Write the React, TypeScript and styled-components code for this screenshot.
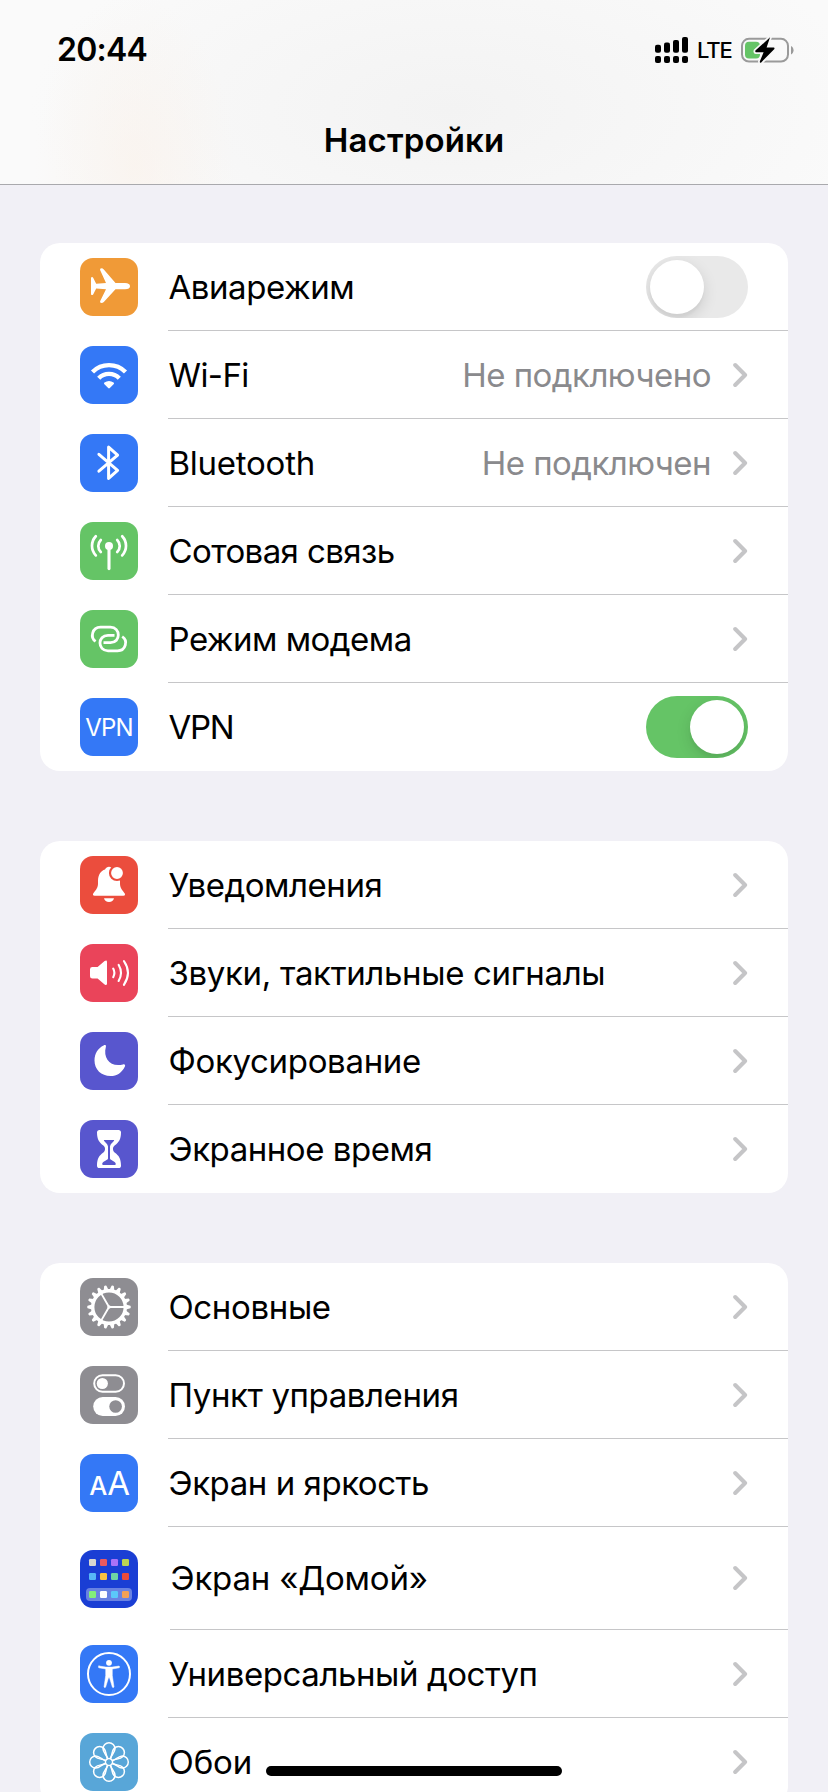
import React from 'react';
import styled, { createGlobalStyle } from 'styled-components';

const GlobalStyle = createGlobalStyle`
  * { box-sizing: border-box; }
  body {
    margin: 0;
    background: #f1f0f6;
    font-family: Inter, "Noto Sans", sans-serif;
    overflow: hidden;
  }
`;

const Screen = styled.div`
  display: flex;
  flex-direction: column;
  width: 828px;
  height: 1792px;
  overflow: hidden;
  background: #f1f0f6;
  color: #000;
`;

const Header = styled.header`
  display: flex;
  flex-direction: column;
  flex: none;
  height: 185px;
  border-bottom: 1px solid #a9a9ad;
  background:
    radial-gradient(ellipse 100px 170px at 135px 165px, rgba(250, 241, 233, 0.6), rgba(250, 243, 236, 0) 100%),
    radial-gradient(ellipse 420px 200px at 450px 110px, #f3f3f3 0%, rgba(243, 243, 243, 0) 100%),
    #fafafa;
`;

const StatusBar = styled.div`
  display: flex;
  align-items: center;
  justify-content: space-between;
  height: 100px;
  padding: 0 34px 0 57px;
`;

const Clock = styled.time`
  font-size: 32px;
  font-weight: 600;
  line-height: 40px;
  letter-spacing: -0.75px;
`;

const StatusIcons = styled.div`
  display: flex;
  align-items: center;
`;

const Network = styled.span`
  width: 51px;
  padding-left: 8px;
  font-size: 22px;
  font-weight: 500;
  line-height: 30px;
  letter-spacing: -1.1px;
`;

const NavTitle = styled.h1`
  margin: 20px 0 0;
  text-align: center;
  font-size: 33px;
  font-weight: 600;
  line-height: 40px;
  letter-spacing: 0.15px;
`;

const Groups = styled.main`
  display: flex;
  flex-direction: column;
  gap: 70px;
  padding: 58px 40px 0;
`;

const Group = styled.section`
  display: flex;
  flex-direction: column;
  flex: none;
  border-radius: 20px;
  background: #fff;
  overflow: hidden;
`;

const Row = styled.div<{ $tall?: boolean }>`
  display: flex;
  align-items: center;
  height: ${(p) => (p.$tall ? 103 : 88)}px;
  padding-left: 40px;
`;

const Tile = styled.div<{ $color: string }>`
  flex: none;
  width: 58px;
  height: 58px;
  border-radius: 13px;
  background: ${(p) => p.$color};
  overflow: hidden;

  svg {
    display: block;
  }
`;

const RowBody = styled.div<{ $divider: boolean; $tall?: boolean }>`
  display: flex;
  align-items: center;
  flex: 1;
  height: 100%;
  margin-left: ${(p) => (p.$tall ? 32 : 30)}px;
  padding-right: 40px;
  border-bottom: 1px solid ${(p) => (p.$divider ? '#c6c6c8' : 'transparent')};
`;

const Label = styled.span<{ $tracking: number }>`
  flex: 1;
  padding-left: 0.5px;
  font-size: 33px;
  line-height: 42px;
  letter-spacing: ${(p) => p.$tracking}px;
  white-space: nowrap;
`;

const Value = styled.span<{ $tracking: number }>`
  margin-right: 22px;
  color: #8a8a8d;
  font-size: 33px;
  line-height: 42px;
  letter-spacing: ${(p) => p.$tracking}px;
  white-space: nowrap;
`;

const Toggle = styled.span<{ $on: boolean }>`
  display: flex;
  justify-content: ${(p) => (p.$on ? 'flex-end' : 'flex-start')};
  width: 102px;
  height: 62px;
  padding: 4px;
  border-radius: 31px;
  background: ${(p) => (p.$on ? '#65c466' : '#e9e9e9')};
  overflow: hidden;
`;

const Knob = styled.span`
  width: 54px;
  height: 54px;
  border-radius: 50%;
  background: #fff;
  box-shadow: 0 5px 15px rgba(0, 0, 0, 0.12), 0 4px 3px rgba(0, 0, 0, 0.03);
`;

const HomeIndicator = styled.div`
  position: absolute;
  left: 266px;
  top: 1766px;
  width: 296px;
  height: 10px;
  border-radius: 5px;
  background: #000;
`;

const Chevron = () => (
  <svg width="15" height="26" viewBox="0 0 15 26" fill="none">
    <path d="M2.2 3 L12.1 13 L2.2 23" stroke="#c5c5c7" strokeWidth="4" strokeLinecap="round" strokeLinejoin="round" />
  </svg>
);

const Glyph = ({ children }: { children: React.ReactNode }) => (
  <svg width="58" height="58" viewBox="0 0 58 58" fill="none" strokeLinecap="round" strokeLinejoin="round">
    {children}
  </svg>
);

const Airplane = () => (
  <Glyph>
    <path
      fill="#fff"
      d="M45 25H35.5L23.8 11.4Q22.8 10.2 21.5 10.2Q19.6 10.3 20.1 12L26 25L16.2 25.8L13.3 20Q12.7 18.8 11.8 19Q11 19.2 11 20.2V36Q11 37 11.8 37.1Q12.8 37.2 13.3 36.2L16.2 30.6L26 31.3L20.1 43.3Q19.6 45 21.5 45.1Q22.8 45.1 23.8 44L35.5 31.3H45Q50 31 50 28.2Q50 25.2 45 25Z"
    />
  </Glyph>
);

const Wifi = () => (
  <Glyph>
    <g stroke="#fff" strokeWidth="4.4" strokeLinecap="butt">
      <path d="M12.5 26A23.3 23.3 0 0 1 45.5 26" />
      <path d="M18.7 32.2A14.5 14.5 0 0 1 39.3 32.2" />
    </g>
    <path fill="#fff" d="M28.2 42L24.2 38Q23.6 37.2 24.4 36.6Q29 33.4 33.6 36.6Q34.4 37.2 33.8 38L29.8 42Q29 42.8 28.2 42Z" />
  </Glyph>
);

const Bluetooth = () => (
  <Glyph>
    <path stroke="#fff" strokeWidth="3" d="M18.9 20.3L37.6 36.3L28.6 44.4V13.1L37.6 21.2L18.9 37.2" />
  </Glyph>
);

const Antenna = () => (
  <Glyph>
    <circle cx="29" cy="24" r="4" fill="#fff" />
    <path stroke="#fff" strokeWidth="3.1" d="M29 25V46.6" />
    <g stroke="#fff" strokeWidth="2.7">
      <path d="M20.8 18A8.4 8.4 0 0 0 20.8 30" />
      <path d="M15.8 14.2A14 14 0 0 0 15.8 33.4" />
      <path d="M37.2 18A8.4 8.4 0 0 1 37.2 30" />
      <path d="M42.2 14.2A14 14 0 0 1 42.2 33.4" />
    </g>
  </Glyph>
);

const Hotspot = () => (
  <Glyph>
    <g stroke="#fff" strokeWidth="2.8" strokeLinecap="butt">
      <path d="M15.6 31.4C9.8 27.6 12.2 17.2 20.5 17.2H30.5C40.8 17.2 41 32.6 30.5 32.6H23.5" />
      <path d="M42.2 26.6C48.2 30.4 46 40.8 37.5 40.8H28C17.3 40.8 17.3 25.4 28 25.4H34.5" />
    </g>
  </Glyph>
);

const IconText = styled.text`
  fill: #fff;
  font-family: Inter, sans-serif;
`;

const Vpn = () => (
  <Glyph>
    <IconText x="5.2" y="38" fontSize="24" letterSpacing="-0.8">VPN</IconText>
  </Glyph>
);

const Bell = () => (
  <Glyph>
    <path
      fill="#fff"
      d="M13.2 37.6C14.6 35.4 17.8 32.6 18 28V24.5C18.2 18.2 20.8 14.8 25 13.4C26 11.6 27.3 10.7 29 10.7C30.7 10.7 32 11.6 33 13.4C37.2 14.8 39.8 18.2 40 24.5V28C40.2 32.6 43.4 35.4 44.8 37.6Q45.6 39.8 43.4 39.8H14.6Q12.4 39.8 13.2 37.6Z"
    />
    <path fill="#fff" d="M24 42.2H34C33.6 44.6 31.6 46 29 46C26.4 46 24.4 44.6 24 42.2Z" />
    <circle cx="37" cy="17" r="7" fill="#fff" stroke="#eb4d3d" strokeWidth="2.2" />
  </Glyph>
);

const Speaker = () => (
  <Glyph>
    <path
      fill="#fff"
      d="M12.4 23H17.6L24.6 17.1Q27 15.6 27 18V39.6Q27 42 24.6 40.4L17.6 34.4H12.4Q10 34.4 10 32.2V25.2Q10 23 12.4 23Z"
    />
    <g stroke="#fff" strokeWidth="2.1">
      <path d="M33.2 24.6Q35.6 28.9 33.2 33.2" />
      <path d="M38.6 20.8Q43.4 28.9 38.6 37" />
      <path d="M43.9 17Q52 28.9 43.9 40.8" />
    </g>
  </Glyph>
);

const Moon = () => (
  <Glyph>
    <path
      fill="#fff"
      d="M23.6 13.4C25.2 12.6 26.3 13.3 25.9 14.8C22.6 26.6 31 35.8 43 32.4C44.8 31.9 45.6 33 44.9 34.4C42 40.6 36.8 44 30.6 44C21.2 44 14.5 37.5 14.5 28.5C14.5 21.4 18.2 15.9 23.6 13.4Z"
    />
  </Glyph>
);

const Hourglass = () => (
  <Glyph>
    <path
      fill="#fff"
      d="M19.5 10H38.5Q41 10 41 12.6C41 19.6 38.6 22.6 35 25.3C33.5 26.4 33 27.4 33 29C33 30.6 33.5 31.6 35 32.7C38.6 35.4 41 38.4 41 45.4Q41 48 38.5 48H19.5Q17 48 17 45.4C17 38.4 19.4 35.4 23 32.7C24.5 31.6 25 30.6 25 29C25 27.4 24.5 26.4 23 25.3C19.4 22.6 17 19.6 17 12.6Q17 10 19.5 10Z"
    />
    <path fill="#5856ce" d="M24.2 20H33.8Q34.4 20.2 34 20.8C33 22.4 30.2 24 30 26.4V38.6C30.2 40.6 35.8 41.2 35.8 44Q35.8 44.9 34.8 44.9H23.2Q22.2 44.9 22.2 44C22.2 41.2 27.8 40.6 28 38.6V26.4C27.8 24 25 22.4 24 20.8Q23.6 20.2 24.2 20Z" />
  </Glyph>
);

const gearTeeth = Array.from({ length: 18 }, (_, i) => i * 20);
const gearSpokes = [0, 120, 240];

const Gear = () => (
  <Glyph>
    <circle cx="29" cy="29" r="16.3" stroke="#fff" strokeWidth="3.4" />
    {gearTeeth.map((angle) => (
      <path key={angle} fill="#fff" transform={`rotate(${angle} 29 29)`} d="M46 26.6L50.4 27.8Q51.4 29 50.4 30.2L46 31.4Z" />
    ))}
    {gearSpokes.map((angle) => (
      <path key={angle} stroke="#fff" strokeWidth="1.9" transform={`rotate(${angle} 29 29)`} d="M29 29H45" />
    ))}
    <circle cx="29" cy="29" r="1.7" fill="#fff" />
  </Glyph>
);

const ControlToggles = () => (
  <Glyph>
    <rect x="14.2" y="9.2" width="29.8" height="16.6" rx="8.3" stroke="#fff" strokeWidth="2" />
    <circle cx="22.3" cy="17.5" r="5.6" fill="#fff" />
    <rect x="13.2" y="31" width="31.8" height="19" rx="9.5" fill="#fff" />
    <circle cx="35.6" cy="40.5" r="6.3" fill="#8e8d92" />
  </Glyph>
);

const TextSize = () => (
  <Glyph>
    <IconText x="9.3" y="41" fontSize="25.5" fontWeight="500" textLength="17">A</IconText>
    <IconText x="27.2" y="41" fontSize="33">A</IconText>
  </Glyph>
);

const homeApps = [
  ['#d8d7d0', '#ea5a60', '#a972f8', '#bbd352'],
  ['#57b7f7', '#f8c43f', '#6fd5a4', '#ea4b3a'],
  ['#83f07a', '#ffffff', '#5bc8fa', '#f2a157'],
];
const homeRows = [9, 23, 41];

const HomeScreen = () => (
  <Glyph>
    <rect x="6" y="38" width="46" height="13" rx="4" fill="#6982e2" />
    {homeApps.map((row, r) =>
      row.map((color, c) => <rect key={color} x={9 + c * 11} y={homeRows[r]} width="7" height="7" rx="1.3" fill={color} />),
    )}
  </Glyph>
);

const Accessibility = () => (
  <Glyph>
    <circle cx="29" cy="29" r="21" stroke="#fff" strokeWidth="2" />
    <circle cx="29" cy="17.8" r="2.9" fill="#fff" />
    <path
      fill="#fff"
      stroke="#fff"
      strokeWidth="0.5"
      d="M18.9 21L26 22.1H32L39.1 21Q40.2 21.9 39.2 22.8L32.3 24V30.5L34 42Q33.5 43 32.4 42.2L29.5 32.8H28.5L25.6 42.2Q24.5 43 24 42L25.7 30.5V24L18.8 22.8Q17.8 21.9 18.9 21Z"
    />
  </Glyph>
);

const petals = Array.from({ length: 8 }, (_, i) => i * 45);

const Flower = () => (
  <Glyph>
    <circle cx="29" cy="29" r="3.6" stroke="#fff" strokeWidth="1.5" />
    {petals.map((angle) => (
      <path
        key={angle}
        stroke="#fff"
        strokeWidth="1.5"
        transform={`rotate(${angle} 29 29)`}
        d="M27.6 25.6C26.8 22 23 19.6 23 15.7A6 6 0 0 1 35 15.7C35 19.6 31.2 22 30.4 25.6"
      />
    ))}
  </Glyph>
);

const signalBars = [
  { x: 0, y: 7.7 },
  { x: 9, y: 5.6 },
  { x: 18, y: 3 },
  { x: 27, y: 0 },
];

const Signal = () => (
  <svg width="34" height="26" viewBox="0 0 34 26">
    {signalBars.map(({ x, y }) => (
      <g key={x}>
        <rect x={x} y={y} width="6" height={15.8 - y} rx="2" />
        <rect x={x} y="19" width="6" height="7" rx="2" />
      </g>
    ))}
  </svg>
);

const Battery = () => (
  <svg width="54" height="30" viewBox="0 0 54 30" fill="none">
    <rect x="2" y="3.8" width="46" height="22.8" rx="7" stroke="#9a9a9a" strokeWidth="2" />
    <path fill="#9a9a9a" d="M51 11C54.4 12.6 54.4 17.8 51 19.4Z" />
    <rect x="5" y="6.8" width="15" height="16.8" rx="4" fill="#65c466" />
    <path
      fill="#000"
      stroke="#f8f8f8"
      strokeWidth="3.6"
      paintOrder="stroke"
      d="M29.8 3Q30.4 1.8 29.8 2.6L15.4 15.6Q15 17.2 16 17.2H23.6L19.8 26.6Q19.8 28.6 21.2 27.4L34.4 14Q34.8 12.4 33.8 12.4H26.6Z"
    />
  </svg>
);

type Item = {
  label: string;
  tracking: number;
  color: string;
  icon: () => React.JSX.Element;
  value?: string;
  valueTracking?: number;
  toggle?: boolean;
  tall?: boolean;
};

const groups: Item[][] = [
  [
    { label: 'Авиарежим', tracking: -0.45, color: '#f09a37', icon: Airplane, toggle: false },
    { label: 'Wi-Fi', tracking: -0.6, color: '#3478f6', icon: Wifi, value: 'Не подключено', valueTracking: -0.52 },
    { label: 'Bluetooth', tracking: -0.25, color: '#3478f6', icon: Bluetooth, value: 'Не подключен', valueTracking: -0.55 },
    { label: 'Сотовая связь', tracking: -0.6, color: '#65c466', icon: Antenna },
    { label: 'Режим модема', tracking: -0.52, color: '#65c466', icon: Hotspot },
    { label: 'VPN', tracking: -1.3, color: '#3478f6', icon: Vpn, toggle: true },
  ],
  [
    { label: 'Уведомления', tracking: -0.45, color: '#eb4d3d', icon: Bell },
    { label: 'Звуки, тактильные сигналы', tracking: -0.34, color: '#ea445a', icon: Speaker },
    { label: 'Фокусирование', tracking: -0.33, color: '#5856ce', icon: Moon },
    { label: 'Экранное время', tracking: -0.46, color: '#5856ce', icon: Hourglass },
  ],
  [
    { label: 'Основные', tracking: -0.36, color: '#8e8d92', icon: Gear },
    { label: 'Пункт управления', tracking: -0.4, color: '#8e8d92', icon: ControlToggles },
    { label: 'Экран и яркость', tracking: -0.45, color: '#3478f6', icon: TextSize },
    { label: 'Экран «Домой»', tracking: -0.2, color: '#1a3ed4', icon: HomeScreen, tall: true },
    { label: 'Универсальный доступ', tracking: -0.42, color: '#3478f6', icon: Accessibility },
    { label: 'Обои', tracking: -0.1, color: '#58a6d8', icon: Flower },
  ],
];

const SettingsRow = ({ item, last }: { item: Item; last: boolean }) => {
  const Icon = item.icon;
  return (
    <Row $tall={item.tall}>
      <Tile $color={item.color}>
        <Icon />
      </Tile>
      <RowBody $divider={!last} $tall={item.tall}>
        <Label $tracking={item.tracking}>{item.label}</Label>
        {item.value && <Value $tracking={item.valueTracking ?? 0}>{item.value}</Value>}
        {item.toggle === undefined ? (
          <Chevron />
        ) : (
          <Toggle $on={item.toggle}>
            <Knob />
          </Toggle>
        )}
      </RowBody>
    </Row>
  );
};

export default function App() {
  return (
    <Screen>
      <GlobalStyle />
      <Header>
        <StatusBar>
          <Clock>20:44</Clock>
          <StatusIcons>
            <Signal />
            <Network>LTE</Network>
            <Battery />
          </StatusIcons>
        </StatusBar>
        <NavTitle>Настройки</NavTitle>
      </Header>
      <Groups>
        {groups.map((items, g) => (
          <Group key={g}>
            {items.map((item, i) => (
              <SettingsRow key={item.label} item={item} last={i === items.length - 1} />
            ))}
          </Group>
        ))}
      </Groups>
      <HomeIndicator />
    </Screen>
  );
}
